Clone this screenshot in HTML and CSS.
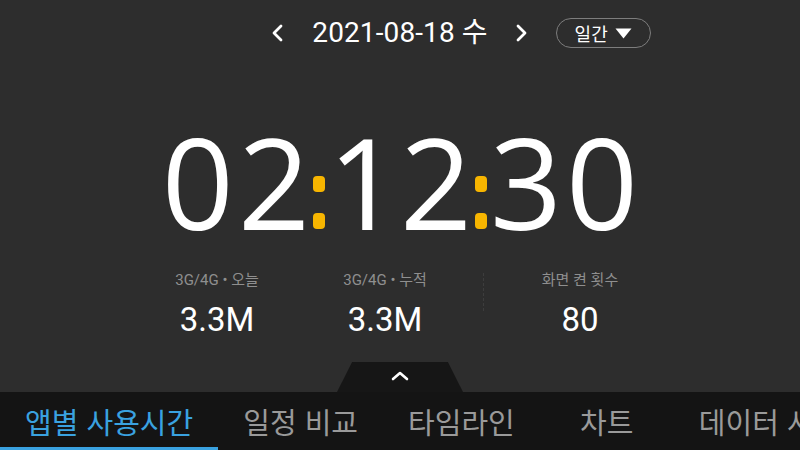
FILE: index.html
```html
<!DOCTYPE html>
<html lang="ko">
<head>
<meta charset="utf-8">
<link rel="stylesheet" href="styles.css">
</head>
<body>
<div class="app">
  <header class="header">
    <div class="side left">
      <svg class="chev" width="14" height="18" viewBox="0 0 14 18"><path d="M10 2 L3 9 L10 16" fill="none" stroke="#fff" stroke-width="2.8" stroke-linecap="round" stroke-linejoin="round"/></svg>
    </div>
    <div class="date">2021-08-18 수</div>
    <div class="side right">
      <svg class="chev" width="14" height="18" viewBox="0 0 14 18"><path d="M4 2 L11 9 L4 16" fill="none" stroke="#fff" stroke-width="2.8" stroke-linecap="round" stroke-linejoin="round"/></svg>
      <div class="pill"><span>일간</span><svg width="17" height="11" viewBox="0 0 17 11"><path d="M0.5 0.5 H16.5 L8.5 10.5 Z" fill="#fff"/></svg></div>
    </div>
  </header>

  <div class="clock">
    <span class="num outer">02</span><span class="colon">:</span><span class="num">12</span><span class="colon">:</span><span class="num outer">30</span>
  </div>

  <div class="stats">
    <div class="stat">
      <div class="label">3G/4G • 오늘</div>
      <div class="value">3.3M</div>
    </div>
    <div class="stat">
      <div class="label">3G/4G • 누적</div>
      <div class="value">3.3M</div>
    </div>
    <div class="divider"></div>
    <div class="stat">
      <div class="label">화면 켠 횟수</div>
      <div class="value">80</div>
    </div>
  </div>

  <div class="handle-row">
    <div class="handle">
      <svg width="18" height="10" viewBox="0 0 18 10"><path d="M2 8 L9 2 L16 8" fill="none" stroke="#fff" stroke-width="2.6" stroke-linecap="round" stroke-linejoin="round"/></svg>
    </div>
  </div>

  <nav class="tabs">
    <div class="tab active">앱별 사용시간</div>
    <div class="tab">일정 비교</div>
    <div class="tab">타임라인</div>
    <div class="tab">차트</div>
    <div class="tab">데이터 사용량</div>
  </nav>
</div>
</body>
</html>
```

FILE: styles.css
```css
html, body {
  margin: 0;
  padding: 0;
}
body {
  width: 800px;
  height: 450px;
  overflow: hidden;
  background: #2d2d2d;
  font-family: Roboto, "Noto Sans CJK KR", sans-serif;
  color: #fff;
}
.app {
  display: flex;
  flex-direction: column;
  height: 450px;
}
.header {
  height: 66px;
  display: grid;
  grid-template-columns: 1fr auto 1fr;
  align-items: center;
}
.side {
  display: flex;
  align-items: center;
}
.side.left {
  justify-content: flex-end;
  padding-right: 27px;
}
.side.right {
  padding-left: 26px;
}
.chev {
  display: block;
}
.date {
  font-size: 28px;
  line-height: 34px;
  letter-spacing: 0.1px;
}
.pill {
  margin-left: 28px;
  width: 95px;
  height: 30px;
  box-sizing: border-box;
  border: 1.5px solid #7d7d7d;
  border-radius: 15px;
  display: flex;
  align-items: center;
  justify-content: center;
  gap: 7px;
  font-size: 18px;
  font-family: "Noto Sans CJK KR", sans-serif;
}
.pill span {
  line-height: 22px;
}
.pill svg {
  display: block;
}
.clock {
  margin-top: 69px;
  height: 92px;
  display: flex;
  justify-content: center;
  align-items: flex-start;
  font-family: "Open Sans", sans-serif;
  font-weight: 500;
  font-size: 126px;
  line-height: 92px;
}
.num {
  display: block;
}
.num.outer {
  letter-spacing: 4px;
  margin-right: -4px;
}
.colon {
  position: relative;
  display: block;
  width: 12px;
  height: 53px;
  margin: 41px 3px 0 3px;
  font-size: 0;
  color: transparent;
}
.colon::before,
.colon::after {
  content: "";
  position: absolute;
  left: 0;
  width: 12px;
  height: 16px;
  border-radius: 4px;
  background: #f7b500;
}
.colon::before { top: 0; }
.colon::after { bottom: 0; }

.stats {
  margin-top: 44px;
  margin-left: 133px;
  display: grid;
  grid-template-columns: 168px 168px 28px 166px;
  align-items: start;
}
.stat {
  display: flex;
  flex-direction: column;
  align-items: center;
}
.label {
  font-size: 15px;
  line-height: 18px;
  color: #8f8f8f;
}
.value {
  margin-top: 12px;
  font-size: 33px;
  line-height: 38px;
}
.divider {
  justify-self: center;
  width: 0;
  height: 38px;
  margin-top: 2px;
  border-left: 1px dashed #3d3d3d;
}
.handle-row {
  margin-top: auto;
  display: flex;
  justify-content: center;
}
.handle {
  width: 126px;
  height: 30px;
  background: #161616;
  clip-path: polygon(12% 0, 88% 0, 100% 100%, 0 100%);
  display: flex;
  justify-content: center;
  align-items: center;
  padding-bottom: 2px;
  box-sizing: border-box;
}
.handle svg { display: block; }
.tabs {
  height: 58px;
  background: #141414;
  display: flex;
  white-space: nowrap;
  overflow: hidden;
  font-family: "Noto Sans CJK KR", sans-serif;
  font-size: 29px;
}
.tab {
  flex: none;
  min-width: 134px;
  box-sizing: border-box;
  padding: 3px 25px 0;
  display: flex;
  align-items: center;
  justify-content: center;
  color: #9a9a9a;
  border-bottom: 3px solid transparent;
}
.tab.active {
  color: #3aa2e0;
  border-bottom-color: #3aa2e0;
}
```
